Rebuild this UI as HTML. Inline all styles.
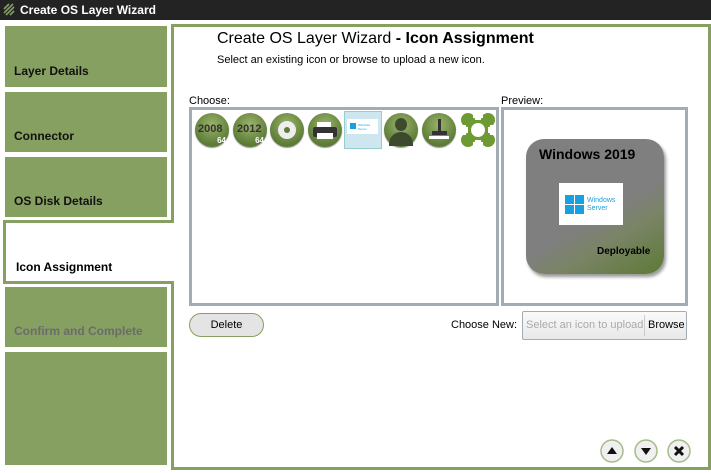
<!DOCTYPE html><html><head><style>
body{margin:0;width:711px;height:473px;background:#fff;font-family:"Liberation Sans",Arial,sans-serif;position:relative;overflow:hidden}
.a{position:absolute}
.tab{position:absolute;left:5px;width:162px;background:#86a061;font-weight:bold;font-size:12px;color:#111}
.tab span{position:absolute;left:9px;bottom:9px}
.ic{position:absolute;top:113px;width:34px;height:34px;border-radius:50%;background:radial-gradient(circle at 50% 35%,#9ab46c,#5d7c37 70%,#4a6a2a);box-shadow:0 1px 1px #999}
</style></head><body>
<div class="a" style="left:0;top:0;width:711px;height:20px;background:#232323"></div>
<svg class="a" style="left:3px;top:3px" width="12" height="13"><path d="M1 6L6 1M1 10L10 1M3 12L11 4M7 12L11 8" stroke="#86a061" stroke-width="1.6"/></svg>
<div class="a" style="left:20px;top:3px;color:#fff;font-size:12px;font-weight:bold">Create OS Layer Wizard</div>
<div class="a" style="left:171px;top:24px;width:534px;height:440px;border:3px solid #86a061"></div>
<div class="tab" style="top:26px;height:61px"><span>Layer Details</span></div>
<div class="tab" style="top:92px;height:60px"><span>Connector</span></div>
<div class="tab" style="top:157px;height:60px"><span>OS Disk Details</span></div>
<div class="a" style="left:3px;top:220px;width:168px;height:58px;border:3px solid #86a061;border-right:none;background:#fff"><span class="a" style="left:10px;top:37px;font-weight:bold;font-size:12px">Icon Assignment</span></div>
<div class="tab" style="top:287px;height:60px;color:#6b6b6b"><span>Confirm and Complete</span></div>
<div class="tab" style="top:352px;height:113px"></div>
<div class="a" style="left:217px;top:30px;font-size:16px">Create OS Layer Wizard <b>- Icon Assignment</b></div>
<div class="a" style="left:217px;top:54px;font-size:11px">Select an existing icon or browse to upload a new icon.</div>
<div class="a" style="left:189px;top:95px;font-size:11px">Choose:</div>
<div class="a" style="left:501px;top:95px;font-size:11px">Preview:</div>
<div class="a" style="left:189px;top:107px;width:304px;height:193px;border:3px solid #a3abb5"></div>
<div class="a" style="left:501px;top:107px;width:181px;height:193px;border:3px solid #a3abb5"></div>
<div class="ic" style="left:195px"><b class="a" style="left:3px;top:10px;font-size:11px;color:#333">2008</b><b class="a" style="right:3px;bottom:2px;font-size:8px;color:#fff">64</b></div>
<div class="ic" style="left:233px"><b class="a" style="left:4px;top:10px;font-size:11px;color:#333">2012</b><b class="a" style="right:3px;bottom:2px;font-size:8px;color:#fff">64</b></div>
<div class="ic" style="left:270px"><div class="a" style="left:8px;top:8px;width:18px;height:18px;border-radius:50%;background:#eee"></div><div class="a" style="left:14px;top:14px;width:6px;height:6px;border-radius:50%;background:#5d7c37"></div></div>
<div class="ic" style="left:308px"><div class="a" style="left:9px;top:9px;width:14px;height:5px;background:#fff"></div><div class="a" style="left:5px;top:14px;width:24px;height:10px;background:#333;border-radius:2px"></div><div class="a" style="left:9px;top:20px;width:16px;height:6px;background:#fff"></div></div>
<div class="a" style="left:344px;top:111px;width:36px;height:36px;background:#cde6f0;border:1px solid #9cc"></div>
<div class="a" style="left:347px;top:119px;width:31px;height:15px;background:#fff"></div>
<div class="a" style="left:350px;top:123px;width:6px;height:6px;background:#19a0e0"></div>
<div class="a" style="left:358px;top:123px;font-size:3px;color:#19a0e0;line-height:4px">Windows<br>Server</div>
<div class="ic" style="left:384px"><div class="a" style="left:11px;top:5px;width:12px;height:13px;border-radius:50%;background:#3d4a2e"></div><div class="a" style="left:5px;top:19px;width:24px;height:14px;border-radius:12px 12px 0 0;background:#3d4a2e"></div></div>
<div class="ic" style="left:422px"><div class="a" style="left:16px;top:6px;width:3px;height:14px;background:#333"></div><div class="a" style="left:10px;top:18px;width:15px;height:4px;background:#333"></div><div class="a" style="left:7px;top:23px;width:20px;height:3px;background:#fff"></div></div>
<svg class="a" style="left:460px;top:112px" width="36" height="36"><g fill="#6e9a34"><circle cx="8" cy="8" r="7"/><circle cx="28" cy="8" r="7"/><circle cx="8" cy="28" r="7"/><circle cx="28" cy="28" r="7"/><path d="M8 8L28 8L28 28L8 28Z"/></g><circle cx="18" cy="18" r="7" fill="#fff"/><rect x="13" y="0" width="10" height="6" fill="#fff"/><rect x="13" y="30" width="10" height="6" fill="#fff"/><rect x="0" y="13" width="6" height="10" fill="#fff"/><rect x="30" y="13" width="6" height="10" fill="#fff"/></svg>
<div class="a" style="left:526px;top:139px;width:138px;height:135px;border-radius:18px;background:linear-gradient(150deg,#7f7f7f 55%,#7a8466 70%,#5d7a36);box-shadow:2px 3px 3px #999"></div>
<div class="a" style="left:539px;top:146px;font-size:14px;font-weight:bold">Windows 2019</div>
<div class="a" style="left:559px;top:183px;width:64px;height:42px;background:#fff"></div>
<div class="a" style="left:565px;top:195px;width:19px;height:19px;background:linear-gradient(#fff 0 0) 9px 0/1px 100% no-repeat,linear-gradient(#fff 0 0) 0 9px/100% 1px no-repeat,#19a0e0"></div>
<div class="a" style="left:587px;top:197px;font-size:7px;color:#19a0e0;line-height:8px">Windows<br>Server</div>
<div class="a" style="left:597px;top:246px;font-size:10px;font-weight:bold">Deployable</div>
<div class="a" style="left:189px;top:313px;width:73px;height:22px;border:1px solid #86a061;border-radius:12px;background:#e4e4e4;text-align:center;line-height:22px;font-size:11px">Delete</div>
<div class="a" style="left:451px;top:319px;font-size:11px">Choose New:</div>
<div class="a" style="left:522px;top:311px;width:163px;height:27px;border:1px solid #a3abb5;border-radius:2px;background:linear-gradient(#fafafa,#e8e8e8);font-size:11px;line-height:27px"><span style="color:#aaa;margin-left:3px">Select an icon to upload</span><span class="a" style="left:121px;top:3px;height:21px;border-left:1px solid #ccc"></span><span class="a" style="left:125px">Browse</span></div>
<svg class="a" style="left:600px;top:438px" width="95" height="26"><g fill="#f0f0f0" stroke="#a5bb88" stroke-width="1.5"><circle cx="12" cy="13" r="11"/><circle cx="46" cy="13" r="11"/><circle cx="79" cy="13" r="11"/></g><path d="M7 16L12 9L17 16Z M41 10L51 10L46 17Z" fill="#111"/><path d="M75 9L83 17M83 9L75 17" stroke="#111" stroke-width="3"/></svg>
</body></html>
